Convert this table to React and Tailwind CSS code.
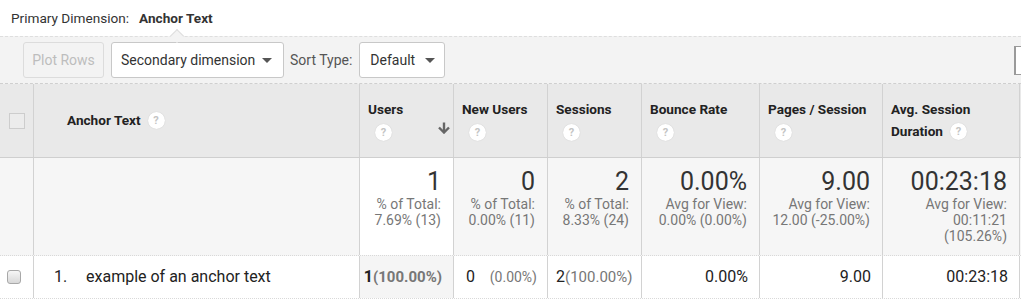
import React from 'react'

const row = 'grid grid-cols-[34px_326px_94px_94px_94px_118px_123px_137px_1fr]'

function Help({ className = '' }) {
  return (
    <span
      className={`inline-flex h-[17px] w-[17px] items-center justify-center rounded-full bg-white text-[11px] font-bold leading-none text-[#c4c4c4] shadow-[0_0_1px_rgba(0,0,0,0.2)] ${className}`}
    >
      ?
    </span>
  )
}

function Caret() {
  return <span className="h-0 w-0 border-x-[5px] border-t-[5px] border-x-transparent border-t-[#555]" />
}

function SortArrow() {
  return (
    <svg width="14" height="12" viewBox="0 0 14 12" className="self-center">
      <path d="M7 0.5 V10" stroke="#666" strokeWidth="2.4" fill="none" />
      <path d="M2 5.5 L7 10.5 L12 5.5" stroke="#666" strokeWidth="2.4" fill="none" />
    </svg>
  )
}

const metricHeads = [
  { label: 'New Users' },
  { label: 'Sessions' },
  { label: 'Bounce Rate' },
  { label: 'Pages / Session' },
]

const totals = [
  { value: '0', sub: ['% of Total:', '0.00% (11)'] },
  { value: '2', sub: ['% of Total:', '8.33% (24)'] },
  { value: '0.00%', sub: ['Avg for View:', '0.00% (0.00%)'] },
  { value: '9.00', sub: ['Avg for View:', '12.00 (-25.00%)'] },
  { value: '00:23:18', sub: ['Avg for View:', '00:11:21', '(105.26%)'] },
]

export default function App() {
  return (
    <div className="w-[1021px] overflow-hidden bg-white font-[Roboto,sans-serif] text-[#222]">
      {/* Primary dimension line */}
      <div className="flex h-[36px] items-center pl-[11px] text-[13.6px]">
        <span className="text-[#333]">Primary Dimension:</span>
        <span className="ml-[10px] font-bold text-[#333]">Anchor Text</span>
      </div>

      {/* Toolbar */}
      <div className="relative flex h-[48px] items-center border-t border-b border-t-[#dedede] border-b-[#cfcfcf] border-dashed bg-[#f3f3f3] pl-[23px]">
        <span className="absolute -top-[6px] left-[172px] h-[10px] w-[10px] rotate-45 border-l border-t border-[#dedede] bg-[#f3f3f3]" />
        <button className="flex h-[36px] w-[81px] items-center justify-center rounded-[3px] border border-[#dcdcdc] text-[14px] text-[#bdbdbd]">
          Plot Rows
        </button>
        <button className="ml-[7px] flex h-[36px] w-[173px] items-center justify-between rounded-[3px] border border-[#c8c8c8] bg-white pl-[9px] pr-[11px] text-[14px] text-[#333]">
          <span>Secondary dimension</span>
          <Caret />
        </button>
        <span className="ml-[6px] text-[14px] text-[#555]">Sort Type:</span>
        <button className="ml-[7px] flex h-[36px] w-[86px] items-center justify-between rounded-[3px] border border-[#c8c8c8] bg-white pl-[10px] pr-[9px] text-[14px] text-[#333]">
          <span>Default</span>
          <Caret />
        </button>
        <span className="ml-auto h-[29px] w-[7px] border-y border-l-2 border-[#9a9a9a] bg-white" />
      </div>

      {/* Header row */}
      <div className={`${row} h-[74px] border-b border-[#cfcfcf] bg-[#e9e9e9] text-[13.6px] font-bold`}>
        <div className="flex items-center justify-center border-r border-[#d2d2d2]">
          <span className="h-4 w-4 border border-[#cdcdcd] bg-[#ececec]" />
        </div>
        <div className="flex items-center border-r border-[#d2d2d2] pl-[33px]">
          <span>Anchor Text</span>
          <Help className="ml-[7px]" />
        </div>
        <div className="flex justify-between border-r border-[#d2d2d2] pl-2 pr-[2px] pt-[14px]">
          <div className="leading-[22px]">
            <div>Users</div>
            <Help className="ml-[7px] mt-[3px]" />
          </div>
          <SortArrow />
        </div>
        {metricHeads.map((h) => (
          <div key={h.label} className="border-r border-[#d2d2d2] pl-2 pt-[14px] leading-[22px]">
            <div>{h.label}</div>
            <Help className="ml-[7px] mt-[3px]" />
          </div>
        ))}
        <div className="border-r border-[#d2d2d2] pl-2 pt-[14px] leading-[22px]">
          <div>Avg. Session</div>
          <div className="flex items-center">
            Duration
            <Help className="ml-[7px]" />
          </div>
        </div>
        <div />
      </div>

      {/* Totals row */}
      <div className={`${row} h-[98px] border-b border-dotted border-[#d9d9d9] bg-[#f6f6f6] text-[#333]`}>
        <div className="border-r border-[#d2d2d2]" />
        <div className="border-r border-[#d2d2d2]" />
        <div className="border-r border-[#d2d2d2] bg-white pr-3 pt-[10px] text-right">
          <div className="text-[25px] leading-[28px]">1</div>
          <div className="text-[14px] leading-[16px] text-[#777]">
            <div>% of Total:</div>
            <div>7.69% (13)</div>
          </div>
        </div>
        {totals.map((t) => (
          <div key={t.value + t.sub[1]} className="border-r border-[#d2d2d2] pr-3 pt-[10px] text-right">
            <div className="text-[25px] leading-[28px]">{t.value}</div>
            <div className="text-[14px] leading-[16px] text-[#777]">
              {t.sub.map((s) => (
                <div key={s}>{s}</div>
              ))}
            </div>
          </div>
        ))}
        <div />
      </div>

      {/* Data row */}
      <div className={`${row} h-[43px] border-b border-dotted border-[#d9d9d9] text-[16px]`}>
        <div className="flex items-center border-r border-[#d2d2d2] pl-[7px]">
          <span className="h-[14px] w-[14px] rounded-[3px] border border-[#a8a8a8] bg-gradient-to-b from-[#f6f6f6] to-[#d8d8d8]" />
        </div>
        <div className="flex items-center border-r border-[#d2d2d2] pl-[20px]">
          <span className="w-[32px]">1.</span>
          <span>example of an anchor text</span>
        </div>
        <div className="flex items-center justify-end border-r border-[#d2d2d2] bg-[#f5f5f5] pr-[11px]">
          <span className="font-bold">1</span>
          <span className="text-[15px] font-bold text-[#777]">(100.00%)</span>
        </div>
        <div className="flex items-center justify-between border-r border-[#d2d2d2] pl-[12px] pr-[10px]">
          <span>0</span>
          <span className="text-[14px] text-[#777]">(0.00%)</span>
        </div>
        <div className="flex items-center border-r border-[#d2d2d2] pl-[8px]">
          <span>2</span>
          <span className="text-[15px] text-[#777]">(100.00%)</span>
        </div>
        <div className="flex items-center justify-end border-r border-[#d2d2d2] pr-[11px]">0.00%</div>
        <div className="flex items-center justify-end border-r border-[#d2d2d2] pr-[11px]">9.00</div>
        <div className="flex items-center justify-end border-r border-[#d2d2d2] pr-[11px]">00:23:18</div>
        <div />
      </div>
    </div>
  )
}
